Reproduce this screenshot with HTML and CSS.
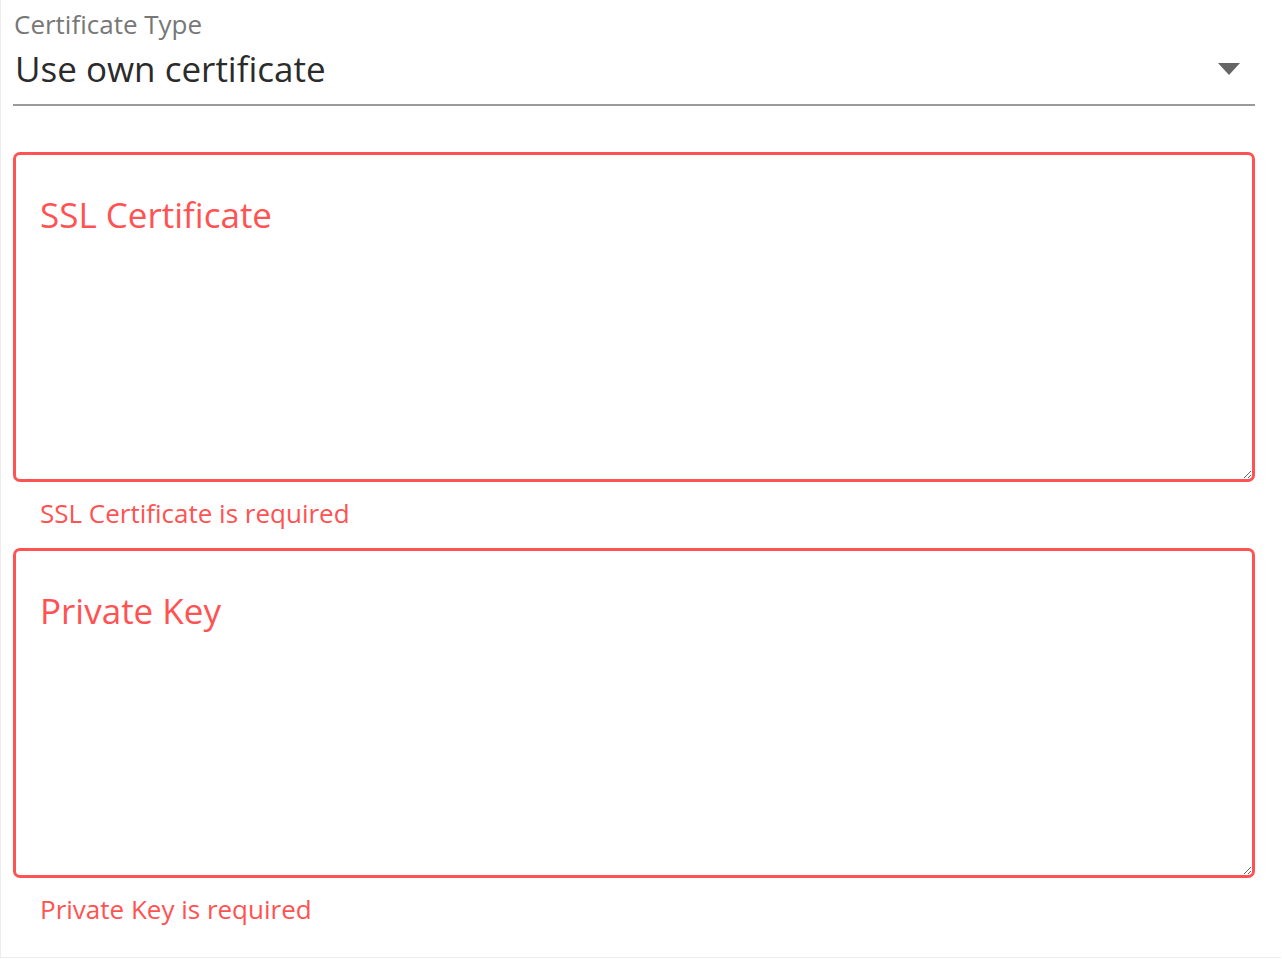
FILE: index.html
```html
<!DOCTYPE html>
<html lang="en">
<head>
<meta charset="utf-8">
<title>Certificate</title>
<link rel="stylesheet" href="styles.css">
</head>
<body>
<div class="panel">
  <div class="select-field">
    <div class="select-label">Certificate Type</div>
    <div class="select-row">
      <span class="select-value">Use own certificate</span>
      <svg class="caret" width="22" height="12" viewBox="0 0 22 12"><path d="M0 0 L22 0 L11 12 Z" fill="#666"/></svg>
    </div>
  </div>
  <div class="text-field">
    <textarea class="area" placeholder="SSL Certificate"></textarea>
    <div class="error">SSL Certificate is required</div>
  </div>
  <div class="text-field">
    <textarea class="area" placeholder="Private Key"></textarea>
    <div class="error">Private Key is required</div>
  </div>
</div>
</body>
</html>
```
FILE: styles.css
```css
html, body {
  margin: 0;
  padding: 0;
  background: #fff;
}
body {
  font-family: "Open Sans", "Noto Sans", sans-serif;
}
.panel {
  width: 1281px;
  height: 958px;
  box-sizing: border-box;
  border-left: 1px solid #ececec;
  border-bottom: 1px solid #ececec;
  padding: 8px 26px 0 12px;
}
.select-field {
  border-bottom: 2px solid #9a9a9a;
  padding-bottom: 10px;
}
.select-label {
  font-size: 26px;
  line-height: 32px;
  color: #777;
  padding-left: 1px;
  margin-bottom: 4px;
}
.select-row {
  display: flex;
  align-items: center;
  justify-content: space-between;
  height: 50px;
  padding-left: 2px;
}
.select-value {
  font-size: 35px;
  line-height: 50px;
  color: #2b2b2b;
}
.caret {
  margin-right: 15px;
  margin-top: -1px;
}
.text-field {
  margin-top: 46px;
}
.text-field + .text-field {
  margin-top: 18px;
}
.area {
  display: block;
  width: 100%;
  height: 330px;
  box-sizing: border-box;
  border: 3px solid #ff5252;
  border-radius: 7px;
  padding: 36px 24px;
  font-family: "Open Sans", "Noto Sans", sans-serif;
  font-size: 35px;
  line-height: 48px;
  color: #ff5252;
  background: #fff;
  outline: none;
}
.area::placeholder {
  color: #ff5252;
  opacity: 1;
}
.error {
  font-size: 26px;
  line-height: 34px;
  color: #ff5252;
  padding: 14px 0 0 27px;
}
```
